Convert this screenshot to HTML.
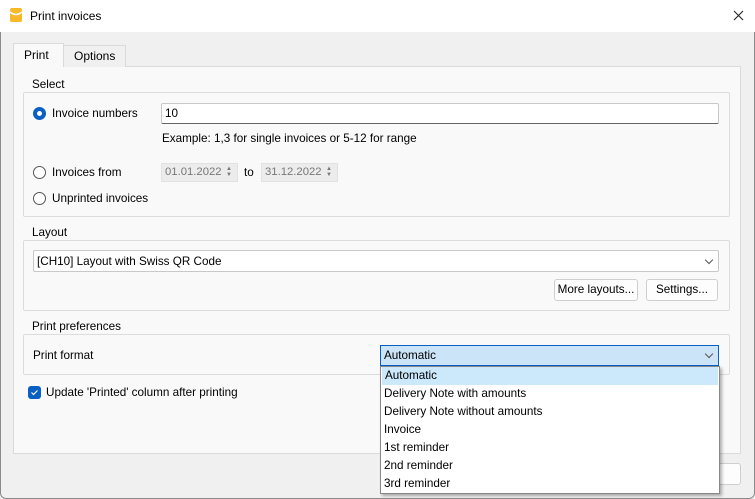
<!DOCTYPE html>
<html><head><style>
*{box-sizing:border-box;margin:0;padding:0}
body{width:755px;height:499px;background:#f0f0f0;font-family:"Liberation Sans",sans-serif;font-size:11.7px;color:#000;position:relative;overflow:hidden}
.a{position:absolute}
.win{left:0;top:0;width:755px;height:499px;border:1px solid #8a8a8a;border-radius:6px;background:#f0f0f0;overflow:hidden}
.title{left:0;top:0;width:755px;height:32px;background:#fff}
.pane{left:13px;top:66px;width:728px;height:388px;background:#f9f9f9;border:1px solid #dadada}
.grp{border:1px solid #dcdcdc;border-radius:2px}
.gt{background:#f9f9f9;padding:0 2px}
.radio{width:13px;height:13px;border:1px solid #555;border-radius:50%;background:#fff}
.radio.on{border:4px solid #0a5fc4}
.input{background:#fff;border:1px solid #c8c8c8;border-bottom:1px solid #666;border-radius:2px}
.btn{background:#fdfdfd;border:1px solid #cfcfcf;border-radius:3px;text-align:center;line-height:20px}
.spin{background:#ececec;border:1px solid #e2e2e2;color:#777;padding-left:3px;line-height:17px;font-size:11.3px}
.chev{width:6px;height:6px;border-right:1px solid #555;border-bottom:1px solid #555;transform:rotate(45deg)}
</style></head><body>
<div class="a win"></div>
<div class="a title"></div>
<svg class="a" style="left:9px;top:7px" width="14" height="16"><rect x="1" y="1" width="12" height="14" rx="2" fill="#f7b92a"/><path d="M1 5 Q7 10 13 5" stroke="#fff" stroke-width="1.5" fill="none"/></svg>
<div class="a" style="left:30px;top:9px;font-size:12px">Print invoices</div>
<svg class="a" style="left:733px;top:10px" width="11" height="11"><path d="M1 1L10 10M10 1L1 10" stroke="#222" stroke-width="1.1"/></svg>

<div class="a pane"></div>
<div class="a" style="left:63px;top:45px;width:63px;height:22px;background:#f0f0f0;border:1px solid #dadada;border-bottom:none"></div>
<div class="a" style="left:74px;top:49px;font-size:12px">Options</div>
<div class="a" style="left:13px;top:43px;width:51px;height:24px;background:#f9f9f9;border:1px solid #dadada;border-bottom:none"></div>
<div class="a" style="left:24px;top:48px;font-size:12px">Print</div>

<div class="a grp" style="left:23px;top:92px;width:707px;height:125px"></div>
<div class="a gt" style="left:30px;top:78px">Select</div>
<div class="a radio on" style="left:33px;top:107px"></div>
<div class="a" style="left:52px;top:107px">Invoice numbers</div>
<div class="a input" style="left:161px;top:103px;width:558px;height:21px;padding:3px 3px">10</div>
<div class="a" style="left:162px;top:132px">Example: 1,3 for single invoices or 5-12 for range</div>
<div class="a radio" style="left:33px;top:166px"></div>
<div class="a" style="left:52px;top:166px">Invoices from</div>
<div class="a spin" style="left:161px;top:163px;width:77px;height:19px">01.01.2022</div>
<div class="a" style="left:244px;top:166px">to</div>
<div class="a spin" style="left:261px;top:163px;width:77px;height:19px">31.12.2022</div>
<div class="a" style="left:226px;top:166px;font-size:6px;color:#777;line-height:6px">▲<br>▼</div>
<div class="a" style="left:326px;top:166px;font-size:6px;color:#777;line-height:6px">▲<br>▼</div>
<div class="a radio" style="left:33px;top:192px"></div>
<div class="a" style="left:52px;top:192px">Unprinted invoices</div>

<div class="a grp" style="left:23px;top:240px;width:707px;height:71px"></div>
<div class="a gt" style="left:30px;top:226px">Layout</div>
<div class="a input" style="left:33px;top:250px;width:686px;height:22px;padding:4px 3px;border-bottom-color:#c8c8c8">[CH10] Layout with Swiss QR Code</div>
<div class="a chev" style="left:706px;top:257px"></div>
<div class="a btn" style="left:554px;top:279px;width:84px;height:22px">More layouts...</div>
<div class="a btn" style="left:646px;top:279px;width:72px;height:22px">Settings...</div>

<div class="a grp" style="left:23px;top:334px;width:707px;height:41px"></div>
<div class="a gt" style="left:30px;top:320px">Print preferences</div>
<div class="a" style="left:33px;top:349px">Print format</div>

<div class="a" style="left:28px;top:386px;width:13px;height:13px;background:#0a5fc4;border-radius:3px"></div>
<svg class="a" style="left:28px;top:386px" width="13" height="13"><path d="M3.5 6.5L5.5 8.5L9.5 4.5" stroke="#fff" stroke-width="1.2" fill="none"/></svg>
<div class="a" style="left:46px;top:386px">Update 'Printed' column after printing</div>

<div class="a btn" style="left:718px;top:463px;width:23px;height:22px"></div>

<div class="a" style="left:380px;top:345px;width:339px;height:21px;background:#cce4f7;border:1px solid #0a5fc4;padding:3px 3px">Automatic</div>
<div class="a chev" style="left:706px;top:351px"></div>
<div class="a" style="left:380px;top:366px;width:340px;height:128px;background:#fff;border:1px solid #888;box-shadow:2px 2px 3px rgba(0,0,0,.3);line-height:18px;padding-top:0">
<div style="background:#cce8fb;margin:0 1px;padding-left:3px">Automatic</div>
<div style="padding-left:3px">Delivery Note with amounts</div>
<div style="padding-left:3px">Delivery Note without amounts</div>
<div style="padding-left:3px">Invoice</div>
<div style="padding-left:3px">1st reminder</div>
<div style="padding-left:3px">2nd reminder</div>
<div style="padding-left:3px">3rd reminder</div>
</div>
</body></html>
